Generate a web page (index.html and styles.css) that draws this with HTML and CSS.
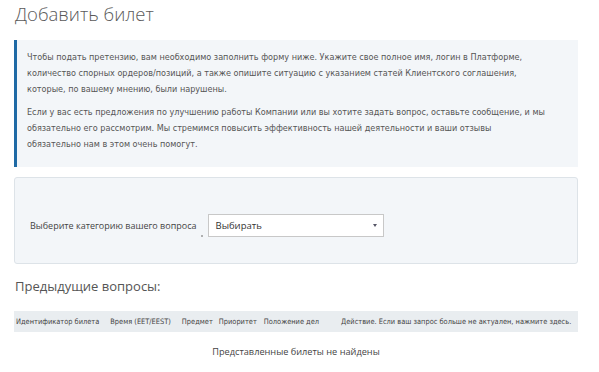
FILE: index.html
```html
<!DOCTYPE html>
<html lang="ru">
<head>
    <meta charset="UTF-8">
    <meta name="viewport" content="width=device-width, initial-scale=1.0">
    <title>Добавить билет</title>
    <link rel="stylesheet" href="styles.css">
</head>
<body>
    <div class="page">
        <h1>Добавить билет</h1>

        <div class="info">
            <p>Чтобы подать претензию, вам необходимо заполнить форму ниже. Укажите свое полное имя, логин в Платформе, количество спорных ордеров/позиций, а также опишите ситуацию с указанием статей Клиентского соглашения, которые, по вашему мнению, были нарушены.</p>
            <p>Если у вас есть предложения по улучшению работы Компании или вы хотите задать вопрос, оставьте сообщение, и мы обязательно его рассмотрим. Мы стремимся повысить эффективность нашей деятельности и ваши отзывы обязательно нам в этом очень помогут.</p>
        </div>

        <div class="form-box">
            <label class="field-label">Выберите категорию вашего вопроса</label>
            <div class="select">
                <span>Выбирать</span>
                <span class="arrow"></span>
            </div>
        </div>

        <h2>Предыдущие вопросы:</h2>

        <table class="tickets">
            <thead>
                <tr>
                    <th class="col-id">Идентификатор билета</th>
                    <th class="col-time">Время (EET/EEST)</th>
                    <th class="col-subject">Предмет</th>
                    <th class="col-priority">Приоритет</th>
                    <th class="col-status">Положение дел</th>
                    <th class="col-action">Действие. Если ваш запрос больше не актуален, нажмите здесь.</th>
                </tr>
            </thead>
            <tbody>
                <tr>
                    <td colspan="6" class="empty">Представленные билеты не найдены</td>
                </tr>
            </tbody>
        </table>
    </div>
</body>
</html>
```

FILE: styles.css
```css
body {
    margin: 0;
    background-color: #fff;
    font-family: "Open Sans", Arial, sans-serif;
    color: #555;
}
.page {
    width: 564px;
    margin-left: 14px;
}
h1 {
    margin: 0;
    padding: 1px 0 0 1px;
    font-size: 18.5px;
    font-weight: 300;
    color: #5a5a5a;
    line-height: 26px;
}
.info {
    margin-top: 13px;
    background-color: #f3f6f9;
    border-left: 3px solid #1f6aa5;
    padding: 9px 31px 15px 10px;
    font-family: "DejaVu Sans Condensed", "DejaVu Sans", sans-serif;
    font-size: 9px;
    line-height: 16px;
    color: #555;
}
.info p {
    margin: 0 0 7px 0;
}
.info p:last-child {
    margin-bottom: 0;
}
.form-box {
    margin-top: 10px;
    height: 87px;
    background-color: #f3f6f9;
    border: 1px solid #dde3e8;
    border-radius: 3px;
    display: flex;
    align-items: center;
    padding-left: 15px;
    padding-top: 10px;
    box-sizing: border-box;
}
.field-label {
    font-size: 9px;
    color: #444;
    position: relative;
    margin-right: 11px;
}
.field-label::after {
    content: "";
    position: absolute;
    right: -6px;
    bottom: -5px;
    width: 2px;
    height: 2px;
    border-radius: 50%;
    background-color: #999;
}
.select {
    width: 176px;
    height: 23px;
    box-sizing: border-box;
    border: 1px solid #c8c8c8;
    background-color: #fff;
    display: flex;
    align-items: center;
    justify-content: space-between;
    padding: 0 6px 0 7px;
    font-size: 9.5px;
    color: #333;
}
.arrow {
    width: 0;
    height: 0;
    border-left: 2.5px solid transparent;
    border-right: 2.5px solid transparent;
    border-top: 3px solid #556;
}
h2 {
    margin: 12px 0 0 1px;
    font-size: 13px;
    font-weight: 400;
    color: #555;
    line-height: 20px;
}
.tickets {
    width: 100%;
    border-collapse: collapse;
    margin-top: 15px;
    font-family: "DejaVu Sans Condensed", "DejaVu Sans", sans-serif;
}
.tickets th {
    background-color: #e9edf0;
    font-size: 7.4px;
    font-weight: 400;
    color: #444;
    text-align: left;
    padding: 0 4px 0 5px;
    height: 21px;
    white-space: nowrap;
}
.tickets .col-id {
    padding-left: 2px;
    padding-right: 6px;
}
.tickets .col-time {
    padding-right: 6px;
}
.tickets .col-subject {
    padding-right: 1px;
}
.tickets .col-priority {
    padding-right: 2px;
}
.tickets .col-status {
    padding-right: 2px;
}
.tickets .col-action {
    width: 100%;
    padding-left: 20px;
}
.empty {
    text-align: center;
    font-family: "Open Sans", Arial, sans-serif;
    font-size: 9.2px;
    color: #444;
    padding-top: 13px;
}
```
